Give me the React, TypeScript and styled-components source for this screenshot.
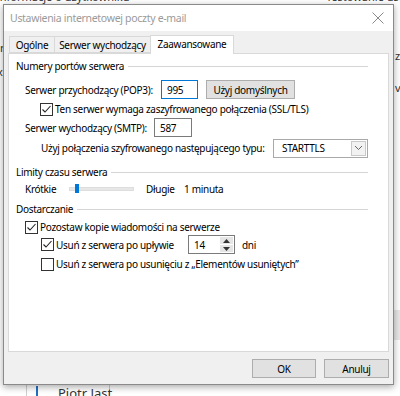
import React from 'react'
import styled, { createGlobalStyle } from 'styled-components'

const GlobalStyle = createGlobalStyle`
  html, body { margin: 0; padding: 0; }
  body {
    width: 400px;
    height: 396px;
    overflow: hidden;
    background: #fff;
    font-family: "Noto Sans", "Segoe UI", sans-serif;
    font-size: 10px;
    letter-spacing: -0.3px;
    color: #000;
  }
  * { box-sizing: border-box; }
`

const Desktop = styled.div`
  position: relative;
  width: 400px;
  height: 396px;
  overflow: hidden;
  background: #fff;
`

// skrawki okna Outlooka, które widać spod dialogu
const BackText = styled.div<{ $x: number; $y: number; $size?: number }>`
  position: absolute;
  left: ${(p) => p.$x}px;
  top: ${(p) => p.$y}px;
  font-size: ${(p) => p.$size || 11}px;
  letter-spacing: 0;
  color: #333;
  white-space: nowrap;
`

const BackLine = styled.div<{ $x: number; $y: number; $w: number; $h: number; $c: string }>`
  position: absolute;
  left: ${(p) => p.$x}px;
  top: ${(p) => p.$y}px;
  width: ${(p) => p.$w}px;
  height: ${(p) => p.$h}px;
  background: ${(p) => p.$c};
`

const Dialog = styled.div`
  position: absolute;
  left: 3px;
  top: 4px;
  width: 391px;
  height: 381px;
  border: 1px solid #8a8a8a;
  background: #f0f0f0;
  box-shadow: 0 2px 7px rgba(0, 0, 0, 0.35);
  display: flex;
  flex-direction: column;
`

const TitleBar = styled.div`
  height: 26px;
  background: #fff;
  display: flex;
  align-items: center;
  padding-left: 6px;
  color: #9a9a9a;
  font-size: 10.5px;
`

const CloseBtn = styled.div`
  margin-left: auto;
  margin-right: 9px;
  display: flex;
  align-items: center;
`

const Body = styled.div`
  flex: 1;
  display: flex;
  flex-direction: column;
  padding: 4px 4px 6px 4px;
`

const TabStrip = styled.div`
  display: flex;
  align-items: flex-end;
  height: 18px;
  padding-left: 2px;
  position: relative;
  z-index: 1;
`

const Tab = styled.div<{ $w: number; $active?: boolean }>`
  width: ${(p) => p.$w}px;
  height: ${(p) => (p.$active ? 19 : 17)}px;
  margin-bottom: ${(p) => (p.$active ? -1 : 0)}px;
  margin-left: -1px;
  border: 1px solid #d9d9d9;
  border-bottom: ${(p) => (p.$active ? 'none' : '1px solid #d9d9d9')};
  background: ${(p) => (p.$active ? '#fff' : '#f0f0f0')};
  display: flex;
  align-items: center;
  justify-content: center;
  padding-bottom: ${(p) => (p.$active ? 2 : 0)}px;
  white-space: nowrap;
`

const Panel = styled.div`
  height: 299px;
  background: #fff;
  border: 1px solid #d9d9d9;
  padding: 0 20px 0 7px;
`

const GroupHeader = styled.div<{ $mt: number }>`
  display: flex;
  align-items: center;
  height: 14px;
  margin-top: ${(p) => p.$mt}px;
  white-space: nowrap;
`

const GroupLine = styled.div`
  flex: 1;
  height: 1px;
  margin-left: 4px;
  background: #d5d5d5;
`

const Row = styled.div<{ $mt: number; $h: number; $indent: number }>`
  display: flex;
  align-items: center;
  height: ${(p) => p.$h}px;
  margin-top: ${(p) => p.$mt}px;
  padding-left: ${(p) => p.$indent}px;
  white-space: nowrap;
`

const Label = styled.span<{ $w?: number }>`
  display: inline-block;
  width: ${(p) => (p.$w ? `${p.$w}px` : 'auto')};
  flex-shrink: 0;
`

const TextBox = styled.div<{ $w: number; $focus?: boolean }>`
  width: ${(p) => p.$w}px;
  height: 19px;
  border: 1px solid ${(p) => (p.$focus ? '#0078d7' : '#7a7a7a')};
  background: #fff;
  display: flex;
  align-items: center;
  padding-left: 5px;
`

const PushButton = styled.div<{ $w: number; $ml?: number }>`
  width: ${(p) => p.$w}px;
  height: 19px;
  margin-left: ${(p) => p.$ml || 0}px;
  background: #e1e1e1;
  border: 1px solid #adadad;
  display: flex;
  align-items: center;
  justify-content: center;
`

const Combo = styled.div`
  width: 96px;
  height: 19px;
  border: 1px solid #a9a9a9;
  background: #fff;
  display: flex;
  align-items: center;
  padding-left: 8px;
  padding-right: 1px;
`

const ComboArrow = styled.div`
  margin-left: auto;
  width: 15px;
  height: 15px;
  border: 1px solid #c9c9c9;
  background: #f2f2f2;
  display: flex;
  align-items: center;
  justify-content: center;
`

const SliderTrack = styled.div`
  position: relative;
  width: 65px;
  height: 4px;
  background: #e7e7e7;
  border: 1px solid #dedede;
  margin-right: 12px;
`

const SliderThumb = styled.div`
  position: absolute;
  left: 5px;
  top: -4px;
  width: 4px;
  height: 9px;
  background: #0078d7;
`

const Box = styled.div`
  width: 13px;
  height: 13px;
  border: 1px solid #333;
  background: #fff;
  display: flex;
  align-items: center;
  justify-content: center;
  margin-right: 2px;
  flex-shrink: 0;
`

const Spinner = styled.div`
  width: 47px;
  height: 19px;
  border: 1px solid #7a7a7a;
  background: #fff;
  display: flex;
  align-items: stretch;
  margin-right: 7px;
`

const SpinValue = styled.div`
  flex: 1;
  display: flex;
  align-items: center;
  padding-left: 5px;
`

const SpinArrows = styled.div`
  width: 14px;
  display: flex;
  flex-direction: column;
  gap: 1px;
  padding: 1px 1px 1px 0;
`

const SpinHalf = styled.div`
  flex: 1;
  background: #e5e5e5;
  display: flex;
  align-items: center;
  justify-content: center;
`

const Footer = styled.div`
  display: flex;
  justify-content: flex-end;
  gap: 8px;
  margin-top: 7px;
`

const Check = ({ on }: { on: boolean }) => (
  <Box>
    {on && (
      <svg width="11" height="11" viewBox="0 0 11 11">
        <path d="M1.5 5.5 L4 8 L9.5 2" fill="none" stroke="#222" strokeWidth="1.1" />
      </svg>
    )}
  </Box>
)

const App = () => {
  return (
    <Desktop>
      <GlobalStyle />
      <BackText $x={-4} $y={-11}>Informacje o użytkowniku</BackText>
      <BackText $x={326} $y={-11}>Testowanie ustaw</BackText>
      <BackText $x={395} $y={48}>z</BackText>
      <BackText $x={395} $y={80}>v</BackText>
      <BackText $x={0} $y={40}>r</BackText>
      <BackText $x={-3} $y={64}>x</BackText>
      <BackLine $x={394} $y={310} $w={6} $h={30} $c="#e8e8e8" />
      <BackLine $x={26} $y={385} $w={1} $h={11} $c="#cfcfcf" />
      <BackLine $x={36} $y={386} $w={2} $h={10} $c="#1f6fc4" />
      <BackLine $x={109} $y={385} $w={1} $h={11} $c="#cfcfcf" />
      <BackText $x={58} $y={384} $size={13}>Piotr Jast</BackText>

      <Dialog>
        <TitleBar>
          Ustawienia internetowej poczty e-mail
          <CloseBtn>
            <svg width="12" height="12" viewBox="0 0 12 12">
              <path d="M0.5 0.5 L11.5 11.5 M11.5 0.5 L0.5 11.5" stroke="#8a8a8a" strokeWidth="1" />
            </svg>
          </CloseBtn>
        </TitleBar>
        <Body>
          <TabStrip>
            <Tab $w={46}>Ogólne</Tab>
            <Tab $w={97}>Serwer wychodzący</Tab>
            <Tab $w={84} $active>
              Zaawansowane
            </Tab>
          </TabStrip>
          <Panel>
            <GroupHeader $mt={5}>
              Numery portów serwera
              <GroupLine />
            </GroupHeader>
            <Row $mt={7} $h={19} $indent={9}>
              <Label $w={136}>Serwer przychodzący (POP3):</Label>
              <TextBox $w={37} $focus>
                995
              </TextBox>
              <PushButton $w={89} $ml={8}>
                Użyj domyślnych
              </PushButton>
            </Row>
            <Row $mt={3} $h={14} $indent={24}>
              <Check on />
              Ten serwer wymaga zaszyfrowanego połączenia (SSL/TLS)
            </Row>
            <Row $mt={2} $h={19} $indent={9}>
              <Label $w={129}>Serwer wychodzący (SMTP):</Label>
              <TextBox $w={38}>587</TextBox>
            </Row>
            <Row $mt={1} $h={20} $indent={25}>
              <Label $w={232}>Użyj połączenia szyfrowanego następującego typu:</Label>
              <Combo>
                STARTTLS
                <ComboArrow>
                  <svg width="9" height="6" viewBox="0 0 9 6">
                    <path d="M1 1 L4.5 4.5 L8 1" fill="none" stroke="#666" strokeWidth="1" />
                  </svg>
                </ComboArrow>
              </Combo>
            </Row>
            <GroupHeader $mt={7}>
              Limity czasu serwera
              <GroupLine />
            </GroupHeader>
            <Row $mt={3} $h={14} $indent={9}>
              <Label $w={44}>Krótkie</Label>
              <SliderTrack>
                <SliderThumb />
              </SliderTrack>
              <Label $w={38}>Długie</Label>
              1 minuta
            </Row>
            <GroupHeader $mt={6}>
              Dostarczanie
              <GroupLine />
            </GroupHeader>
            <Row $mt={4} $h={14} $indent={9}>
              <Check on />
              Pozostaw kopie wiadomości na serwerze
            </Row>
            <Row $mt={1} $h={19} $indent={25}>
              <Check on />
              <Label $w={132}>Usuń z serwera po upływie</Label>
              <Spinner>
                <SpinValue>14</SpinValue>
                <SpinArrows>
                  <SpinHalf>
                    <svg width="7" height="4" viewBox="0 0 7 4">
                      <path d="M0 4 L3.5 0 L7 4 Z" fill="#333" />
                    </svg>
                  </SpinHalf>
                  <SpinHalf>
                    <svg width="7" height="4" viewBox="0 0 7 4">
                      <path d="M0 0 L3.5 4 L7 0 Z" fill="#333" />
                    </svg>
                  </SpinHalf>
                </SpinArrows>
              </Spinner>
              dni
            </Row>
            <Row $mt={3} $h={14} $indent={25}>
              <Check on={false} />
              Usuń z serwera po usunięciu z „Elementów usuniętych”
            </Row>
          </Panel>
          <Footer>
            <PushButton $w={64}>OK</PushButton>
            <PushButton $w={65}>Anuluj</PushButton>
          </Footer>
        </Body>
      </Dialog>
    </Desktop>
  )
}

export default App
